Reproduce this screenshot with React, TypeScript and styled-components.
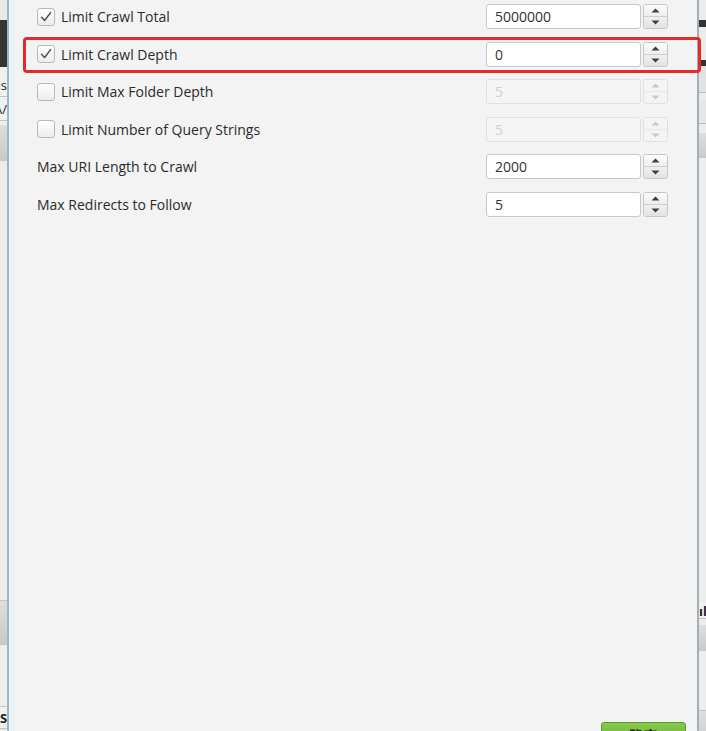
import React from "react";
import styled, { createGlobalStyle } from "styled-components";

const Global = createGlobalStyle`
  html, body { margin: 0; padding: 0; background: #e9e9e9; overflow: hidden; }
  #root { width: 706px; height: 731px; overflow: hidden; }
`;

const FONT = `"Open Sans", "Noto Sans", "Noto Sans CJK SC", sans-serif`;

const Screen = styled.div`
  display: flex;
  width: 706px;
  height: 760px;
  font-family: ${FONT};
`;

const Strip = styled.div`
  width: 7px;
  flex: none;
  display: flex;
  flex-direction: column;
  background: #ececec;
  overflow: hidden;
`;

const Block = styled.div<{ $h: number; $bg?: string; $line?: string; $grad?: boolean }>`
  height: ${(p) => p.$h}px;
  flex: none;
  background: ${(p) => (p.$grad ? "linear-gradient(#dedede, #c9c9c9)" : p.$bg || "#ececec")};
  border-bottom: ${(p) => (p.$line ? `1px solid ${p.$line}` : "none")};
  box-sizing: border-box;
`;

const StripText = styled.div<{ $h: number; $align: "left" | "right"; $bold?: boolean }>`
  height: ${(p) => p.$h}px;
  flex: none;
  display: flex;
  align-items: center;
  justify-content: ${(p) => (p.$align === "right" ? "flex-end" : "flex-start")};
  font-family: ${FONT};
  font-size: 13px;
  font-weight: ${(p) => (p.$bold ? 700 : 400)};
  color: #222;
  white-space: nowrap;
  background: #f1f1f1;
  border-bottom: 1px solid #c2c2c2;
  box-sizing: border-box;
  overflow: hidden;
`;

const Dialog = styled.div`
  flex: 1;
  display: flex;
  border-left: 2px solid #a5b4be;
  border-right: 2px solid #9fb0bb;
`;

const FrameEdge = styled.div`
  width: 5px;
  flex: none;
  background: #e7f4f9;
  border-right: 1px solid #f4e9e6;
`;

const Content = styled.div`
  flex: 1;
  background: #f3f3f3;
  display: flex;
  flex-direction: column;
  justify-content: space-between;
  padding: 4px 29px 8px 22px;
  position: relative;
`;

const Form = styled.div`
  display: flex;
  flex-direction: column;
  gap: 12.5px;
`;

const Row = styled.div`
  display: flex;
  align-items: center;
  justify-content: space-between;
  height: 25px;
`;

const LabelWrap = styled.label`
  display: flex;
  align-items: center;
  gap: 6px;
  font-size: 14px;
  color: #2a2a2a;
  white-space: nowrap;
`;

const Box = styled.span`
  width: 18px;
  height: 18px;
  box-sizing: border-box;
  border: 1px solid #b9b9b9;
  border-radius: 3px;
  background: linear-gradient(#ffffff, #ececec);
  display: flex;
  align-items: center;
  justify-content: center;
`;

const Spinner = styled.div`
  display: flex;
  gap: 2px;
  width: 182px;
`;

const Field = styled.div<{ $disabled?: boolean }>`
  width: 155px;
  height: 25px;
  box-sizing: border-box;
  border: 1px solid ${(p) => (p.$disabled ? "#e0e0e0" : "#c8c8c8")};
  border-radius: 3px;
  background: ${(p) => (p.$disabled ? "#f5f5f5" : "#ffffff")};
  color: ${(p) => (p.$disabled ? "#cfcfcf" : "#333333")};
  font-size: 14px;
  display: flex;
  align-items: center;
  padding-left: 8px;
`;

const Stepper = styled.div<{ $disabled?: boolean }>`
  width: 25px;
  height: 25px;
  box-sizing: border-box;
  border: 1px solid ${(p) => (p.$disabled ? "#e0e0e0" : "#c6c6c6")};
  border-radius: 3px;
  display: flex;
  flex-direction: column;
  overflow: hidden;
`;

const StepHalf = styled.div<{ $disabled?: boolean; $top?: boolean }>`
  flex: 1;
  display: flex;
  align-items: center;
  justify-content: center;
  background: ${(p) => (p.$disabled ? "#f4f4f4" : p.$top ? "linear-gradient(#fbfbfb, #eeeeee)" : "linear-gradient(#f0f0f0, #e2e2e2)")};
  border-top: ${(p) => (p.$top ? "none" : `1px solid ${p.$disabled ? "#e6e6e6" : "#cfcfcf"}`)};
`;

const Footer = styled.div`
  display: flex;
  justify-content: flex-end;
  margin-right: -18px;
`;

const OkButton = styled.button`
  width: 85px;
  height: 30px;
  border: 1px solid #5b9b2a;
  border-radius: 3px;
  background: linear-gradient(#86c84c, #62ad2e);
  color: #1c2a10;
  font-family: ${FONT};
  font-size: 14px;
  font-weight: 700;
  padding: 0;
  padding-bottom: 4px;
`;

const Highlight = styled.div`
  position: absolute;
  left: 23px;
  top: 36.5px;
  width: 678px;
  height: 36.5px;
  box-sizing: border-box;
  border: 3.5px solid #e42a2a;
  border-radius: 4px;
  pointer-events: none;
`;

const Check = () => (
  <svg width="14" height="14" viewBox="0 0 14 14">
    <path d="M2.5 7.2 L5.6 10.5 L11.6 2.6" fill="none" stroke="#4a4a4a" strokeWidth="1.4" strokeLinecap="round" strokeLinejoin="round" />
  </svg>
);

const Arrow = ({ up, disabled }: { up?: boolean; disabled?: boolean }) => (
  <svg width="9" height="5" viewBox="0 0 9 5">
    <polygon points={up ? "0.5,4.5 4.5,0.5 8.5,4.5" : "0.5,0.5 8.5,0.5 4.5,4.5"} fill={disabled ? "#c9c9c9" : "#3e3e3e"} />
  </svg>
);

type Item = { label: string; check?: boolean; checked?: boolean; value: string; disabled?: boolean };

const items: Item[] = [
  { label: "Limit Crawl Total", check: true, checked: true, value: "5000000" },
  { label: "Limit Crawl Depth", check: true, checked: true, value: "0" },
  { label: "Limit Max Folder Depth", check: true, value: "5", disabled: true },
  { label: "Limit Number of Query Strings", check: true, value: "5", disabled: true },
  { label: "Max URI Length to Crawl", value: "2000" },
  { label: "Max Redirects to Follow", value: "5" },
];

const NumberSpinner = ({ value, disabled }: { value: string; disabled?: boolean }) => (
  <Spinner>
    <Field $disabled={disabled}>{value}</Field>
    <Stepper $disabled={disabled}>
      <StepHalf $top $disabled={disabled}>
        <Arrow up disabled={disabled} />
      </StepHalf>
      <StepHalf $disabled={disabled}>
        <Arrow disabled={disabled} />
      </StepHalf>
    </Stepper>
  </Spinner>
);

export default function App() {
  return (
    <>
      <Global />
      <Screen>
        <Strip>
          <Block $h={20} $bg="#e8e8e8" />
          <Block $h={47} $bg="#353535" />
          <Block $h={6} $bg="#efefef" />
          <StripText $h={24} $align="right">ds</StripText>
          <StripText $h={24} $align="right">\/\/</StripText>
          <Block $h={4} $bg="#eeeeee" />
          <Block $h={36} $grad />
          <Block $h={440} $bg="#eeebeb" $line="#c4c4c4" />
          <Block $h={44} $grad />
          <Block $h={62} $bg="#eeeeee" $line="#c4c4c4" />
          <StripText $h={22} $align="left" $bold>S</StripText>
        </Strip>
        <Dialog>
          <FrameEdge />
          <Content>
            <Form>
              {items.map((it) => (
                <Row key={it.label}>
                  <LabelWrap>
                    {it.check && <Box>{it.checked && <Check />}</Box>}
                    {it.label}
                  </LabelWrap>
                  <NumberSpinner value={it.value} disabled={it.disabled} />
                </Row>
              ))}
            </Form>
            <Footer>
              <OkButton>确定</OkButton>
            </Footer>
          </Content>
        </Dialog>
        <Strip>
          <Block $h={20} $bg="#ececec" />
          <Block $h={7} $bg="#333333" />
          <Block $h={33} $bg="#ececec" />
          <Block $h={6} $bg="#333333" />
          <Block $h={27} $bg="#e2e2e2" $line="#bdbdbd" />
          <Block $h={7} $bg="#ececec" />
          <Block $h={24} $bg="#e6e6e6" $line="#bdbdbd" />
          <Block $h={9} $bg="#ececec" />
          <Block $h={25} $grad />
          <Block $h={445} $bg="#ededed" />
          <StripText $h={16} $align="left" $bold>ılɜ</StripText>
          <Block $h={6} $bg="#ececec" />
          <Block $h={26} $grad />
          <Block $h={60} $bg="#ededed" $line="#c4c4c4" />
          <Block $h={40} $grad />
        </Strip>
        <Highlight />
      </Screen>
    </>
  );
}
